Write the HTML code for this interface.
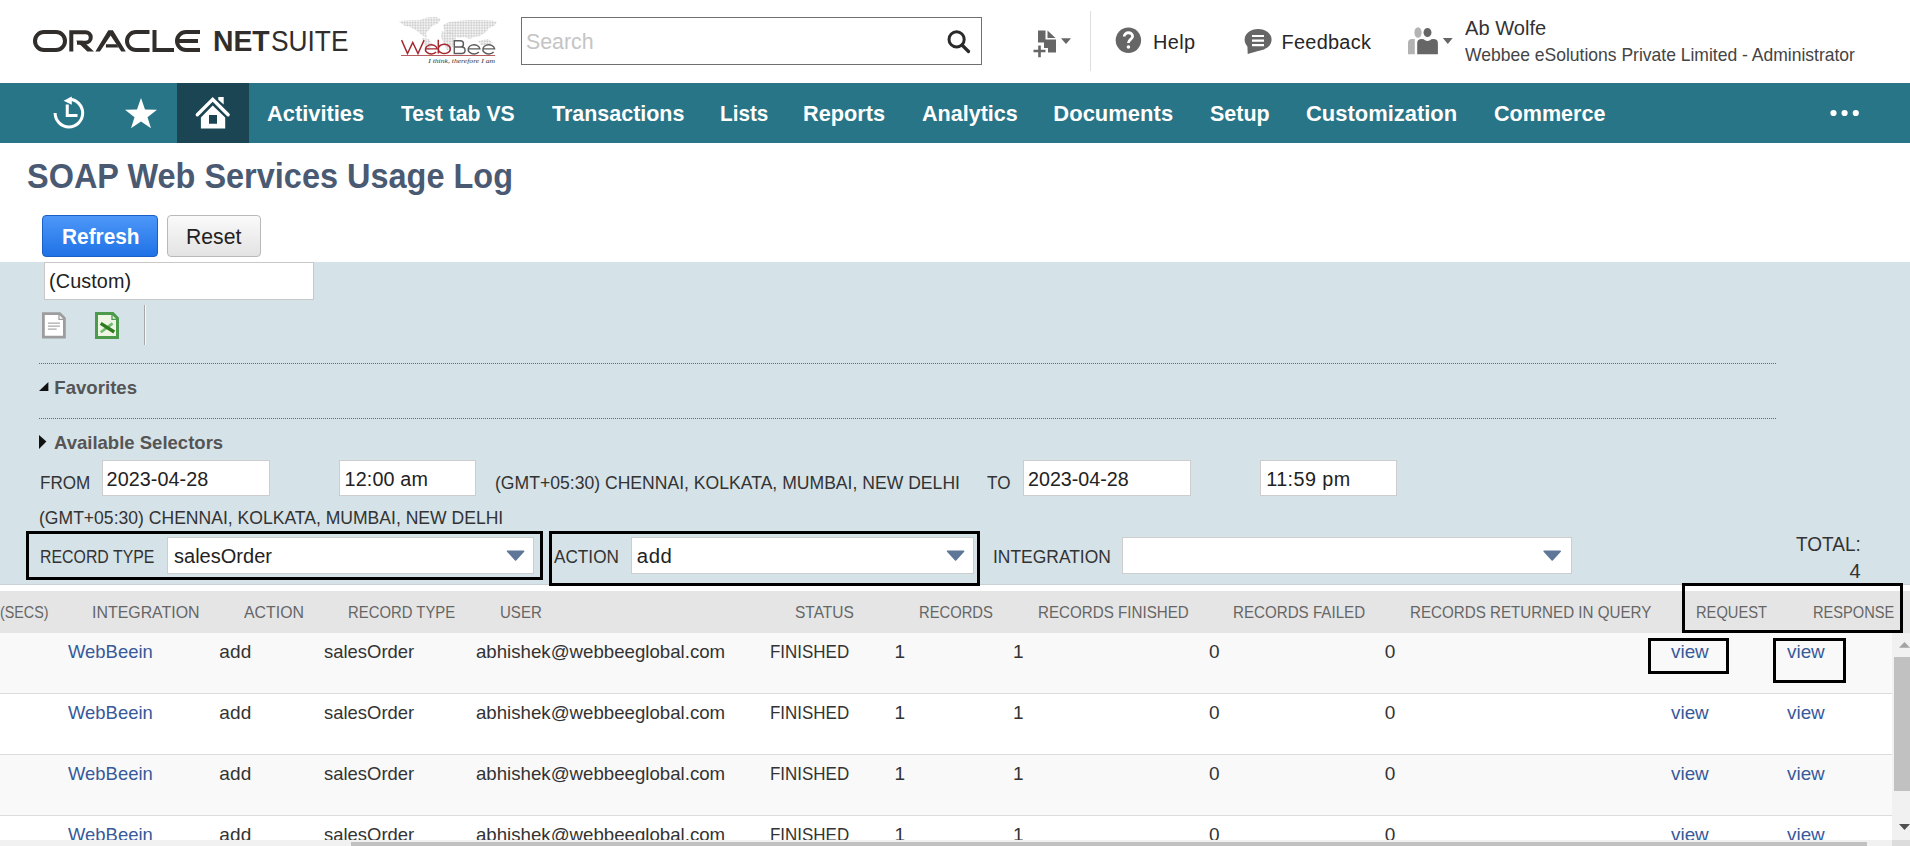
<!DOCTYPE html>
<html><head><meta charset="utf-8"><title>SOAP Web Services Usage Log</title>
<style>
html,body{margin:0;padding:0;width:1910px;height:846px;overflow:hidden;background:#fff;font-family:"Liberation Sans",sans-serif}
.a{position:absolute;box-sizing:border-box}
.t{position:absolute;transform-origin:0 0;white-space:nowrap;line-height:1;font-family:"Liberation Sans",sans-serif}
svg{position:absolute;overflow:visible}
</style></head><body>
<!-- header -->
<div class="a" style="left:0;top:0;width:1910px;height:83px;background:#fff"></div>
<!-- ORACLE logo -->
<svg style="left:0;top:0" width="210" height="83" viewBox="0 0 210 83">
 <g fill="none" stroke="#312d2a" stroke-width="4">
  <path d="M44 32 H56 A9 9 0 0 1 56 50 H44 A9 9 0 0 1 44 32 Z"/>
  <path d="M71.3 51.6 V32.2 H85.5 A5.25 5.25 0 0 1 85.5 42.7 H77"/>
  <path d="M76 40.7 H82.5 L94 51.6 H87.3 Z" fill="#312d2a" stroke="none"/>
  <path d="M95.4 51.6 H99.9 L110.6 35.4 L121.3 51.6 H125.8 L112.9 30.2 H108.3 Z M105.9 44.3 H116.3 L118.4 47.6 H105.9 Z" fill="#312d2a" stroke="none"/>
  <path d="M149.5 32 H136 A9 9 0 0 0 136 50 H149.5"/>
  <path d="M154.5 30 V50 H174"/>
  <path d="M200 32 H186 A9 9 0 0 0 186 50 H200 M178 41 H198"/>
 </g>
</svg>
<!-- WebBee logo -->
<svg style="left:396px;top:14px" width="104" height="52" viewBox="0 0 104 52">
 <defs><pattern id="dots" width="1.6" height="1.6" patternUnits="userSpaceOnUse"><rect width="1.1" height="1.1" fill="#bdbdbd"/></pattern></defs>
 <g fill="url(#dots)" opacity="0.9">
  <path d="M3 7.5 C8 6 16 6.5 24 6 L31 3.5 L40 3 L44.7 5 L42 9.5 L36 12 L33 16 L30 19 L31 23.5 L27 22 L22 17.5 L14 13 L8 11.5 Z"/>
  <path d="M26 24 L33 25 L36 30 L33 36 L29 34 Z"/>
  <path d="M47 11 L53 8 L62 7 L72 6 L84 6 L96 6.5 L101 8 L98 12 L93 14 L90 18 L84 22 L78 23 L74 25 L68 23 L63 24 L58 21 L52 19 L48 16 Z"/>
  <path d="M46 17 L54 18 L60 22 L59 29 L55 35 L51 36 L48 30 L45 23 Z"/>
  <path d="M82 27 L92 25 L97 29 L90 32 L85 31 Z"/>
 </g>
 <g fill="none" stroke-width="1.45">
  <path d="M5.6 26.1 L11.5 39.5 L16.75 28.5 L22 39.5 L28.1 26.1" stroke="#a3262c" stroke-linejoin="miter"/>
  <path d="M29.15 34.85 H41.15 A5.9 4.6 0 1 0 40.15 38.0" stroke="#a3262c"/>
  <path d="M42.3 25.8 V39.6 M42.3 34.85 A6 4.6 0 1 1 42.3 34.9" stroke="#a3262c"/>
  <path d="M58.3 26.1 V39.5 M57.6 26.8 H64.3 A3.15 3.1 0 0 1 64.3 33 H58.3 M58.3 33 H65.8 A3.25 3.25 0 0 1 65.8 39.5 H57.6" stroke="#5d5d5d"/>
  <path d="M71.90 34.85 H83.90 A5.9 4.6 0 1 0 82.90 38.0" stroke="#5d5d5d"/>
  <path d="M86.60 34.85 H98.60 A5.9 4.6 0 1 0 97.60 38.0" stroke="#5d5d5d"/>
 </g>
 <rect x="5.1" y="41" width="94" height="0.9" fill="#b04a4e"/>
 <text x="32.2" y="48.8" font-family="Liberation Serif" font-style="italic" font-size="6.6" fill="#333" textLength="66.8" lengthAdjust="spacingAndGlyphs">I think, therefore I am</text>
</svg>
<!-- search -->
<div class="a" style="left:521px;top:17px;width:461px;height:48px;border:1px solid #707070;background:#fff"></div>
<svg style="left:940px;top:25px" width="34" height="34" viewBox="0 0 34 34">
 <circle cx="16.6" cy="14.4" r="7.6" fill="none" stroke="#2a2a2a" stroke-width="3"/>
 <path d="M22 20 L28.5 26.5" stroke="#2a2a2a" stroke-width="3.2" stroke-linecap="round"/>
</svg>
<!-- new record icon -->
<svg style="left:1030px;top:28px" width="44" height="32" viewBox="0 0 44 32">
 <path d="M8 2.4 H15.5 V11.5 H26 V24.6 H18 V20 H14 V14.5 H8 Z" fill="#666"/>
 <path d="M17.5 2.4 L25.5 10 H17.5 Z" fill="#666"/>
 <path d="M3.5 23 H15.5 M9.5 17.5 V29.3" stroke="#666" stroke-width="2.6"/>
 <path d="M31 10.2 H41 L36 16 Z" fill="#666"/>
</svg>
<div class="a" style="left:1090px;top:11px;width:1px;height:60px;background:#dedede"></div>
<!-- help -->
<svg style="left:1110px;top:22px" width="36" height="36" viewBox="0 0 36 36">
 <circle cx="18.4" cy="18.2" r="12.7" fill="#666"/>
 <path d="M14.2 14.6 C14.2 9.5 22.6 9.5 22.6 14.3 C22.6 17.5 18.4 17.3 18.4 21" fill="none" stroke="#fff" stroke-width="2.8"/>
 <circle cx="18.4" cy="25" r="1.8" fill="#fff"/>
</svg>
<!-- feedback -->
<svg style="left:1240px;top:24px" width="36" height="36" viewBox="0 0 36 36">
 <ellipse cx="18.1" cy="15.65" rx="13.5" ry="10.65" fill="#666"/>
 <path d="M7.4 21 L7.7 29.9 L25 25 Z" fill="#666"/>
 <path d="M12 12 H24 M12 16.6 H24 M12 21.1 H24" stroke="#fff" stroke-width="2.1"/>
</svg>
<!-- user icon -->
<svg style="left:1404px;top:24px" width="52" height="34" viewBox="0 0 52 34">
 <ellipse cx="14" cy="8.5" rx="3.6" ry="5.3" fill="#b3b3b3"/>
 <path d="M4 30.3 V19 Q4 15 8 15 H10.8 V30.3 Z" fill="#b3b3b3"/>
 <ellipse cx="23.5" cy="8.5" rx="4.7" ry="5.3" fill="#666" stroke="#fff" stroke-width="1.4"/>
 <path d="M13.2 30.3 V19.2 Q13.2 15 17.8 15 Q20 15 21 16.2 Q23.5 17.6 26 16.2 Q27 15 29.3 15 Q33.9 15 33.9 19.2 V30.3 Z" fill="#666"/>
 <path d="M38.9 14 H48.7 L43.8 20 Z" fill="#666"/>
</svg>

<!-- nav -->
<div class="a" style="left:0;top:83px;width:1910px;height:60px;background:#297588"></div>
<div class="a" style="left:177px;top:83px;width:72px;height:60px;background:#1b4553"></div>
<svg style="left:48px;top:93px" width="42" height="42" viewBox="0 0 42 42">
 <path d="M7.1 20.1 A13.8 13.8 0 1 0 20.9 6.3" fill="none" stroke="#fff" stroke-width="3"/>
 <path d="M23.8 3.6 V11.8 L15.6 7.7 Z" fill="#fff"/>
 <path d="M19.25 11.4 V22.5 H29.5" fill="none" stroke="#fff" stroke-width="3"/>
</svg>
<svg style="left:120px;top:93px" width="42" height="42" viewBox="0 0 42 42">
 <path d="M21 5 L25 16.5 L37 16.8 L27.5 24.2 L31 35.3 L21 28.5 L11 35.3 L14.5 24.2 L5 16.8 L17 16.5 Z" fill="#fff"/>
</svg>
<svg style="left:192px;top:93px" width="42" height="42" viewBox="0 0 42 42">
 <path d="M5.3 21.8 L20.7 6.4 L36.1 21.8" fill="none" stroke="#fff" stroke-width="3.4" stroke-linecap="round" stroke-linejoin="miter"/>
 <path d="M20.7 12.4 L33.2 24.4 V35.6 H8.9 V24.4 Z M17 22 V30.7 H25 V22 Z" fill="#fff" fill-rule="evenodd"/>
 <path d="M26.3 4 H31.7 V11.4 L26.3 6.8 Z" fill="#fff"/>
</svg>
<svg style="left:1828px;top:108px" width="34" height="10" viewBox="0 0 34 10">
 <circle cx="5.5" cy="5" r="3.1" fill="#fff"/><circle cx="16.6" cy="5" r="3.1" fill="#fff"/><circle cx="27.8" cy="5" r="3.1" fill="#fff"/>
</svg>

<!-- buttons -->
<div class="a" style="left:42px;top:215px;width:116px;height:42px;border:1px solid #1a5fc4;border-radius:4px;background:linear-gradient(#4d97f8,#1f72e6)"></div>
<div class="a" style="left:167px;top:215px;width:94px;height:42px;border:1px solid #b9b9b9;border-radius:4px;background:linear-gradient(#fafafa,#e3e3e3)"></div>

<!-- panel -->
<div class="a" style="left:0;top:262px;width:1910px;height:323px;background:#d5e2e8;border-bottom:1px solid #c9d1d5"></div>
<div class="a" style="left:44px;top:262px;width:270px;height:38px;border:1px solid #c8c8c8;background:#fff"></div>
<!-- doc icons -->
<svg style="left:40px;top:310px" width="90" height="32" viewBox="0 0 90 32">
 <path d="M3.4 3.6 H19.8 L24.4 8.3 V27.2 H3.4 Z" fill="#fff" stroke="#9d9d9d" stroke-width="2.8"/>
 <path d="M19 3.6 V9.4 H24.4" fill="none" stroke="#9d9d9d" stroke-width="1.3"/>
 <path d="M7.9 13.2 H19.9 M7.9 16.2 H19.9 M7.9 19.2 H16.7" stroke="#a9a9a9" stroke-width="1.2"/>
 <path d="M56.5 3.6 H72.8 L77.5 8.3 V27.4 H56.5 Z" fill="#eef5e4" stroke="#4c9a4c" stroke-width="3"/>
 <path d="M72 3.6 V9.4 H77.5" fill="none" stroke="#4c9a4c" stroke-width="1.3"/>
 <path d="M72.6 13.4 L60.8 22.3" stroke="#72bb6c" stroke-width="2.6"/>
 <path d="M60.7 13.4 L74.2 22" stroke="#2f7a1f" stroke-width="3.4"/>
</svg>
<div class="a" style="left:144px;top:305px;width:2px;height:40px;background:#a8a8a8;border-right:1px solid #f4f7f8"></div>
<!-- dotted lines -->
<div class="a" style="left:39px;top:363px;width:1737px;height:1px;background:repeating-linear-gradient(90deg,#596c86 0 1px,transparent 1px 2px)"></div>
<div class="a" style="left:39px;top:418px;width:1737px;height:1px;background:repeating-linear-gradient(90deg,#596c86 0 1px,transparent 1px 2px)"></div>
<!-- triangles -->
<svg style="left:36px;top:378px" width="16" height="74" viewBox="0 0 16 74">
 <path d="M3 13 L12.4 4 V13 Z" fill="#111"/>
 <path d="M3 57 L10.4 63.6 L3 71 Z" fill="#111"/>
</svg>
<!-- inputs -->
<div class="a" style="left:102px;top:460px;width:168px;height:36px;border:1px solid #cdcdcd;background:#fff"></div>
<div class="a" style="left:339px;top:460px;width:137px;height:36px;border:1px solid #cdcdcd;background:#fff"></div>
<div class="a" style="left:1023px;top:460px;width:168px;height:36px;border:1px solid #cdcdcd;background:#fff"></div>
<div class="a" style="left:1260px;top:460px;width:137px;height:36px;border:1px solid #cdcdcd;background:#fff"></div>
<!-- selects -->
<div class="a" style="left:167px;top:537px;width:367px;height:37px;border:1px solid #cdcdcd;background:#fff"></div>
<div class="a" style="left:631px;top:537px;width:343px;height:37px;border:1px solid #cdcdcd;background:#fff"></div>
<div class="a" style="left:1122px;top:537px;width:450px;height:37px;border:1px solid #cdcdcd;background:#fff"></div>
<svg style="left:0;top:540px" width="1600" height="30" viewBox="0 0 1600 30">
 <g fill="#5e7697" stroke="#5e7697" stroke-width="1.6" stroke-linejoin="round">
 <path d="M507.6 11.2 H523.6 L515.6 20 Z"/>
 <path d="M947.6 11.2 H963.6 L955.6 20 Z"/>
 <path d="M1544.2 11.2 H1560.2 L1552.2 20 Z"/>
 </g>
</svg>
<!-- black boxes -->
<div class="a" style="left:26px;top:531px;width:517px;height:49px;border:3px solid #000"></div>
<div class="a" style="left:549px;top:531px;width:431px;height:55px;border:3px solid #000"></div>

<!-- table -->
<div class="a" style="left:0;top:591px;width:1910px;height:42px;background:#e5e5e5"></div>
<div class="a" style="left:0;top:633px;width:1892px;height:60px;background:#f9f9f9"></div>
<div class="a" style="left:0;top:693px;width:1892px;height:1px;background:#dcdcdc"></div>
<div class="a" style="left:0;top:694px;width:1892px;height:60px;background:#fff"></div>
<div class="a" style="left:0;top:754px;width:1892px;height:1px;background:#dcdcdc"></div>
<div class="a" style="left:0;top:755px;width:1892px;height:60px;background:#f9f9f9"></div>
<div class="a" style="left:0;top:815px;width:1892px;height:1px;background:#dcdcdc"></div>
<div class="a" style="left:0;top:816px;width:1892px;height:30px;background:#fff"></div>
<div class="a" style="left:1682px;top:583px;width:221px;height:50px;border:3px solid #000"></div>
<div class="a" style="left:1648px;top:638px;width:81px;height:36px;border:3px solid #000"></div>
<div class="a" style="left:1773px;top:638px;width:73px;height:45px;border:3px solid #000"></div>

<span class="t" style="left:213.10px;top:26.00px;font-size:29.80px;transform:scaleX(0.9500);color:#312d2a;font-weight:bold">NET</span>
<span class="t" style="left:271.12px;top:26.00px;font-size:29.80px;transform:scaleX(0.8831);color:#312d2a">SUITE</span>
<span class="t" style="left:526.05px;top:31.00px;font-size:22.38px;transform:scaleX(0.9540);color:#c4c4c4">Search</span>
<span class="t" style="left:1152.90px;top:33.00px;font-size:19.91px;letter-spacing:0.410px;color:#262626">Help</span>
<span class="t" style="left:1281.50px;top:33.00px;font-size:19.91px;letter-spacing:0.276px;color:#262626">Feedback</span>
<span class="t" style="left:1465.00px;top:18.00px;font-size:20.35px;transform:scaleX(0.9878);color:#333">Ab Wolfe</span>
<span class="t" style="left:1465.00px;top:47.00px;font-size:17.59px;transform:scaleX(0.9960);color:#444">Webbee eSolutions Private Limited - Administrator</span>
<span class="t" style="left:267.30px;top:103.00px;font-size:21.95px;transform:scaleX(0.9955);color:#fff;font-weight:bold">Activities</span>
<span class="t" style="left:401.20px;top:103.00px;font-size:21.95px;transform:scaleX(0.9641);color:#fff;font-weight:bold">Test tab VS</span>
<span class="t" style="left:551.50px;top:103.00px;font-size:21.95px;transform:scaleX(0.9783);color:#fff;font-weight:bold">Transactions</span>
<span class="t" style="left:719.66px;top:103.00px;font-size:21.95px;transform:scaleX(0.9440);color:#fff;font-weight:bold">Lists</span>
<span class="t" style="left:803.41px;top:103.00px;font-size:21.95px;transform:scaleX(0.9904);color:#fff;font-weight:bold">Reports</span>
<span class="t" style="left:921.90px;top:103.00px;font-size:21.95px;transform:scaleX(0.9821);color:#fff;font-weight:bold">Analytics</span>
<span class="t" style="left:1053.30px;top:103.00px;font-size:21.95px;letter-spacing:0.043px;color:#fff;font-weight:bold">Documents</span>
<span class="t" style="left:1209.70px;top:103.00px;font-size:21.95px;transform:scaleX(0.9795);color:#fff;font-weight:bold">Setup</span>
<span class="t" style="left:1306.00px;top:103.00px;font-size:21.95px;transform:scaleX(0.9999);color:#fff;font-weight:bold">Customization</span>
<span class="t" style="left:1494.40px;top:103.00px;font-size:21.95px;transform:scaleX(0.9824);color:#fff;font-weight:bold">Commerce</span>
<span class="t" style="left:26.57px;top:159.00px;font-size:34.88px;transform:scaleX(0.9309);color:#4a5a73;font-weight:bold">SOAP Web Services Usage Log</span>
<span class="t" style="left:62.04px;top:226.00px;font-size:21.66px;transform:scaleX(0.9622);color:#fff;font-weight:bold">Refresh</span>
<span class="t" style="left:186.02px;top:226.00px;font-size:21.66px;transform:scaleX(0.9780);color:#222">Reset</span>
<span class="t" style="left:49.10px;top:272.00px;font-size:19.77px;letter-spacing:0.111px;color:#222">(Custom)</span>
<span class="t" style="left:54.30px;top:379.00px;font-size:18.60px;letter-spacing:0.008px;color:#555;font-weight:bold">Favorites</span>
<span class="t" style="left:54.20px;top:434.00px;font-size:18.60px;transform:scaleX(0.9959);color:#555;font-weight:bold">Available Selectors</span>
<span class="t" style="left:40.08px;top:474.00px;font-size:18.60px;transform:scaleX(0.9187);color:#333">FROM</span>
<span class="t" style="left:106.60px;top:470.00px;font-size:19.77px;letter-spacing:0.062px;color:#222">2023-04-28</span>
<span class="t" style="left:344.50px;top:470.00px;font-size:19.77px;letter-spacing:0.144px;color:#222">12:00 am</span>
<span class="t" style="left:495.35px;top:474.00px;font-size:18.60px;transform:scaleX(0.9458);color:#333">(GMT+05:30) CHENNAI, KOLKATA, MUMBAI, NEW DELHI</span>
<span class="t" style="left:987.30px;top:474.00px;font-size:18.60px;transform:scaleX(0.9192);color:#333">TO</span>
<span class="t" style="left:1028.40px;top:470.00px;font-size:19.77px;transform:scaleX(0.9956);color:#222">2023-04-28</span>
<span class="t" style="left:1266.20px;top:470.00px;font-size:19.77px;letter-spacing:0.425px;color:#222">11:59 pm</span>
<span class="t" style="left:38.66px;top:509.00px;font-size:18.60px;transform:scaleX(0.9443);color:#333">(GMT+05:30) CHENNAI, KOLKATA, MUMBAI, NEW DELHI</span>
<span class="t" style="left:39.95px;top:548.00px;font-size:18.60px;transform:scaleX(0.8540);color:#333">RECORD TYPE</span>
<span class="t" style="left:173.50px;top:546.00px;font-size:20.35px;transform:scaleX(0.9845);color:#222">salesOrder</span>
<span class="t" style="left:554.00px;top:548.00px;font-size:18.60px;transform:scaleX(0.9242);color:#333">ACTION</span>
<span class="t" style="left:636.80px;top:546.00px;font-size:20.35px;letter-spacing:0.544px;color:#222">add</span>
<span class="t" style="left:992.66px;top:548.00px;font-size:18.60px;transform:scaleX(0.9379);color:#333">INTEGRATION</span>
<span class="t" style="left:1796.00px;top:534.00px;font-size:20.06px;transform:scaleX(0.9483);color:#333">TOTAL:</span>
<span class="t" style="left:1849.40px;top:561.00px;font-size:20.06px;letter-spacing:0.000px;color:#333">4</span>
<span class="t" style="left:-0.33px;top:604.00px;font-size:17.30px;transform:scaleX(0.8273);color:#666">(SECS)</span>
<span class="t" style="left:91.68px;top:604.00px;font-size:17.30px;transform:scaleX(0.9209);color:#666">INTEGRATION</span>
<span class="t" style="left:243.90px;top:604.00px;font-size:17.30px;transform:scaleX(0.9181);color:#666">ACTION</span>
<span class="t" style="left:348.04px;top:604.00px;font-size:17.30px;transform:scaleX(0.8605);color:#666">RECORD TYPE</span>
<span class="t" style="left:499.53px;top:604.00px;font-size:17.30px;transform:scaleX(0.8704);color:#666">USER</span>
<span class="t" style="left:795.00px;top:604.00px;font-size:17.30px;transform:scaleX(0.8974);color:#666">STATUS</span>
<span class="t" style="left:918.54px;top:604.00px;font-size:17.30px;transform:scaleX(0.8552);color:#666">RECORDS</span>
<span class="t" style="left:1037.62px;top:604.00px;font-size:17.30px;transform:scaleX(0.8774);color:#666">RECORDS FINISHED</span>
<span class="t" style="left:1232.92px;top:604.00px;font-size:17.30px;transform:scaleX(0.8762);color:#666">RECORDS FAILED</span>
<span class="t" style="left:1409.52px;top:604.00px;font-size:17.30px;transform:scaleX(0.8765);color:#666">RECORDS RETURNED IN QUERY</span>
<span class="t" style="left:1696.35px;top:604.00px;font-size:17.30px;transform:scaleX(0.8508);color:#666">REQUEST</span>
<span class="t" style="left:1813.15px;top:604.00px;font-size:17.30px;transform:scaleX(0.8465);color:#666">RESPONSE</span>
<span class="t" style="left:67.70px;top:642.00px;font-size:19.04px;transform:scaleX(0.9692);color:#38599a">WebBeein</span>
<span class="t" style="left:219.30px;top:642.00px;font-size:19.04px;letter-spacing:0.116px;color:#333">add</span>
<span class="t" style="left:324.00px;top:642.00px;font-size:19.04px;transform:scaleX(0.9687);color:#333">salesOrder</span>
<span class="t" style="left:476.10px;top:642.00px;font-size:19.04px;transform:scaleX(0.9801);color:#333">abhishek@webbeeglobal.com</span>
<span class="t" style="left:769.91px;top:642.00px;font-size:19.04px;transform:scaleX(0.8912);color:#333">FINISHED</span>
<span class="t" style="left:894.40px;top:642.00px;font-size:19.04px;letter-spacing:0.000px;color:#333">1</span>
<span class="t" style="left:1012.90px;top:642.00px;font-size:19.04px;letter-spacing:0.000px;color:#333">1</span>
<span class="t" style="left:1208.90px;top:642.00px;font-size:19.04px;letter-spacing:0.000px;color:#333">0</span>
<span class="t" style="left:1384.80px;top:642.00px;font-size:19.04px;letter-spacing:0.000px;color:#333">0</span>
<span class="t" style="left:1670.90px;top:642.00px;font-size:19.04px;transform:scaleX(0.9914);color:#38599a">view</span>
<span class="t" style="left:1787.30px;top:642.00px;font-size:19.04px;transform:scaleX(0.9914);color:#38599a">view</span>
<span class="t" style="left:67.70px;top:703.00px;font-size:19.04px;transform:scaleX(0.9692);color:#38599a">WebBeein</span>
<span class="t" style="left:219.30px;top:703.00px;font-size:19.04px;letter-spacing:0.116px;color:#333">add</span>
<span class="t" style="left:324.00px;top:703.00px;font-size:19.04px;transform:scaleX(0.9687);color:#333">salesOrder</span>
<span class="t" style="left:476.10px;top:703.00px;font-size:19.04px;transform:scaleX(0.9801);color:#333">abhishek@webbeeglobal.com</span>
<span class="t" style="left:769.91px;top:703.00px;font-size:19.04px;transform:scaleX(0.8912);color:#333">FINISHED</span>
<span class="t" style="left:894.40px;top:703.00px;font-size:19.04px;letter-spacing:0.000px;color:#333">1</span>
<span class="t" style="left:1012.90px;top:703.00px;font-size:19.04px;letter-spacing:0.000px;color:#333">1</span>
<span class="t" style="left:1208.90px;top:703.00px;font-size:19.04px;letter-spacing:0.000px;color:#333">0</span>
<span class="t" style="left:1384.80px;top:703.00px;font-size:19.04px;letter-spacing:0.000px;color:#333">0</span>
<span class="t" style="left:1670.90px;top:703.00px;font-size:19.04px;transform:scaleX(0.9914);color:#38599a">view</span>
<span class="t" style="left:1787.30px;top:703.00px;font-size:19.04px;transform:scaleX(0.9914);color:#38599a">view</span>
<span class="t" style="left:67.70px;top:764.00px;font-size:19.04px;transform:scaleX(0.9692);color:#38599a">WebBeein</span>
<span class="t" style="left:219.30px;top:764.00px;font-size:19.04px;letter-spacing:0.116px;color:#333">add</span>
<span class="t" style="left:324.00px;top:764.00px;font-size:19.04px;transform:scaleX(0.9687);color:#333">salesOrder</span>
<span class="t" style="left:476.10px;top:764.00px;font-size:19.04px;transform:scaleX(0.9801);color:#333">abhishek@webbeeglobal.com</span>
<span class="t" style="left:769.91px;top:764.00px;font-size:19.04px;transform:scaleX(0.8912);color:#333">FINISHED</span>
<span class="t" style="left:894.40px;top:764.00px;font-size:19.04px;letter-spacing:0.000px;color:#333">1</span>
<span class="t" style="left:1012.90px;top:764.00px;font-size:19.04px;letter-spacing:0.000px;color:#333">1</span>
<span class="t" style="left:1208.90px;top:764.00px;font-size:19.04px;letter-spacing:0.000px;color:#333">0</span>
<span class="t" style="left:1384.80px;top:764.00px;font-size:19.04px;letter-spacing:0.000px;color:#333">0</span>
<span class="t" style="left:1670.90px;top:764.00px;font-size:19.04px;transform:scaleX(0.9914);color:#38599a">view</span>
<span class="t" style="left:1787.30px;top:764.00px;font-size:19.04px;transform:scaleX(0.9914);color:#38599a">view</span>
<span class="t" style="left:67.70px;top:825.00px;font-size:19.04px;transform:scaleX(0.9692);color:#38599a">WebBeein</span>
<span class="t" style="left:219.30px;top:825.00px;font-size:19.04px;letter-spacing:0.116px;color:#333">add</span>
<span class="t" style="left:324.00px;top:825.00px;font-size:19.04px;transform:scaleX(0.9687);color:#333">salesOrder</span>
<span class="t" style="left:476.10px;top:825.00px;font-size:19.04px;transform:scaleX(0.9801);color:#333">abhishek@webbeeglobal.com</span>
<span class="t" style="left:769.91px;top:825.00px;font-size:19.04px;transform:scaleX(0.8912);color:#333">FINISHED</span>
<span class="t" style="left:894.40px;top:825.00px;font-size:19.04px;letter-spacing:0.000px;color:#333">1</span>
<span class="t" style="left:1012.90px;top:825.00px;font-size:19.04px;letter-spacing:0.000px;color:#333">1</span>
<span class="t" style="left:1208.90px;top:825.00px;font-size:19.04px;letter-spacing:0.000px;color:#333">0</span>
<span class="t" style="left:1384.80px;top:825.00px;font-size:19.04px;letter-spacing:0.000px;color:#333">0</span>
<span class="t" style="left:1670.90px;top:825.00px;font-size:19.04px;transform:scaleX(0.9914);color:#38599a">view</span>
<span class="t" style="left:1787.30px;top:825.00px;font-size:19.04px;transform:scaleX(0.9914);color:#38599a">view</span>
<!-- scrollbars -->
<div class="a" style="left:1892px;top:633px;width:18px;height:213px;background:#f1f1f1"></div>
<div class="a" style="left:1894px;top:657px;width:16px;height:134px;background:#c1c1c1"></div>
<svg style="left:1890px;top:636px" width="20" height="200" viewBox="0 0 20 200">
 <path d="M9 11.8 L14.5 6 L20 11.8 Z" fill="#a3a3a3"/>
 <path d="M9 188 H20 L14.5 194 Z" fill="#505050"/>
</svg>
<div class="a" style="left:0;top:840px;width:1892px;height:6px;background:#f1f1f1"></div>
<div class="a" style="left:351px;top:842px;width:1516px;height:4px;background:#c1c1c1"></div>
<div class="a" style="left:1892px;top:840px;width:18px;height:6px;background:#dcdcdc"></div>

</body></html>
